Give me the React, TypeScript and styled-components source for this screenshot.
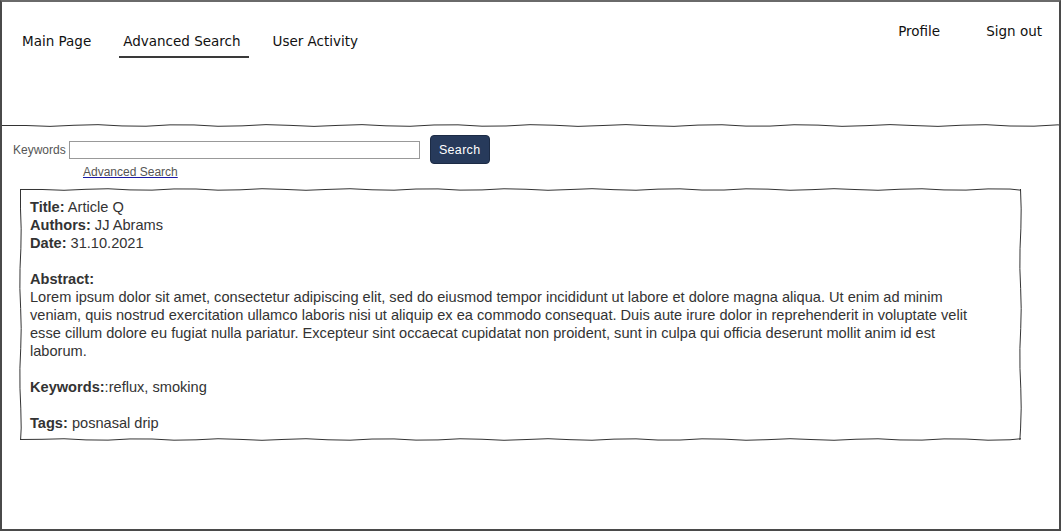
import React from "react";
import styled, { createGlobalStyle } from "styled-components";

const Global = createGlobalStyle`
  html, body { margin: 0; padding: 0; background: #fff; }
  * { box-sizing: border-box; }
`;

const Frame = styled.div`
  width: 1061px;
  height: 531px;
  border: 2px solid #4a4a4a;
  border-top-color: #6a6a6a;
  background: #fff;
  display: flex;
  flex-direction: column;
  overflow: hidden;
`;

const Header = styled.header`
  height: 121px;
  display: flex;
  justify-content: space-between;
  align-items: flex-start;
  padding: 0 17px 0 16px;
  font-family: "DejaVu Sans", Verdana, sans-serif;
  font-size: 13.5px;
  color: #111;
`;

const Tabs = styled.nav`
  display: flex;
  gap: 20px;
  padding-top: 31px;
`;

const Tab = styled.a<{ $active?: boolean }>`
  display: block;
  padding: 0 8px 6px 4px;
  line-height: 17px;
  border-bottom: 2px solid ${(p) => (p.$active ? "#3a3a3a" : "transparent")};
  color: inherit;
  text-decoration: none;
`;

const UserLinks = styled.div`
  display: flex;
  gap: 46px;
  padding-top: 21px;
  line-height: 17px;
`;

const Divider = styled.svg`
  display: block;
  width: 100%;
  height: 5px;
  flex: none;
`;

const SearchRow = styled.div`
  display: flex;
  align-items: center;
  padding: 7px 0 0 11px;
  font-family: "Liberation Sans", Arial, sans-serif;
`;

const Label = styled.label`
  font-size: 12px;
  color: #555;
  margin-right: 3px;
`;

const Input = styled.input`
  width: 351px;
  height: 18px;
  border: 1px solid #999;
  padding: 0 3px;
  margin: 0;
  outline: none;
`;

const Button = styled.button`
  margin-left: 10px;
  width: 60px;
  height: 29px;
  background: #273a5b;
  color: #fff;
  border: 1px solid #1c2b45;
  border-radius: 4px;
  font-family: "Liberation Sans", Arial, sans-serif;
  font-size: 12.5px;
  letter-spacing: 0.3px;
  padding: 0;
`;

const AdvLink = styled.a`
  align-self: flex-start;
  margin: 1px 0 0 81px;
  font-family: "Liberation Sans", Arial, sans-serif;
  font-size: 12px;
  line-height: 14px;
  color: #555;
  text-decoration: underline;
  text-decoration-color: #1a1aa6;
`;

const Card = styled.section`
  position: relative;
  margin: 10px 0 0 18px;
  width: 1001px;
  padding: 9px 10px 8px;
  font-family: "Liberation Sans", Arial, sans-serif;
  font-size: 14.6px;
  line-height: 18px;
  color: #333;
`;

const CardFrame = styled.svg`
  position: absolute;
  inset: 0;
  width: 100%;
  height: 100%;
  pointer-events: none;
  overflow: visible;
`;

const Para = styled.p<{ $gap?: boolean }>`
  margin: ${(p) => (p.$gap ? "18px" : "0")} 0 0;
  max-width: 950px;
`;

const Line = styled.div``;

const Body = styled.div`
  display: flex;
  flex-direction: column;
`;

function wave(width: number, y: number, amp: number, seg: number, phase = 0) {
  let d = `M0 ${y}`;
  let i = 0;
  for (let x = seg; x <= width + seg; x += seg) {
    const dy = Math.sin((i + phase) * 1.7) * amp;
    d += ` L${Math.min(x, width)} ${(y + dy).toFixed(2)}`;
    i++;
  }
  return d;
}

function vwave(height: number, x: number, amp: number, seg: number, phase = 0) {
  let d = `M${x} 0`;
  let i = 0;
  for (let y = seg; y <= height + seg; y += seg) {
    const dx = Math.sin((i + phase) * 1.3) * amp;
    d += ` L${(x + dx).toFixed(2)} ${Math.min(y, height)}`;
    i++;
  }
  return d;
}

export default function App() {
  const W = 1001;
  const H = 252;
  return (
    <>
      <Global />
      <Frame>
        <Header>
          <Tabs>
            <Tab>Main Page</Tab>
            <Tab $active>Advanced Search</Tab>
            <Tab>User Activity</Tab>
          </Tabs>
          <UserLinks>
            <span>Profile</span>
            <span>Sign out</span>
          </UserLinks>
        </Header>
        <Divider viewBox="0 0 1057 5" preserveAspectRatio="none">
          <path d={wave(1057, 2.5, 0.9, 24)} fill="none" stroke="#333" strokeWidth="1" />
        </Divider>
        <Body>
          <SearchRow>
            <Label>Keywords</Label>
            <Input type="text" />
            <Button>Search</Button>
          </SearchRow>
          <AdvLink>Advanced Search</AdvLink>
          <Card>
            <CardFrame viewBox={`0 0 ${W} ${H}`} preserveAspectRatio="none">
              <path d={wave(W, 0.5, 0.8, 22)} fill="none" stroke="#333" strokeWidth="1" />
              <path d={wave(W, H - 0.5, 0.8, 22, 2)} fill="none" stroke="#333" strokeWidth="1" />
              <path d={vwave(H, 0.5, 0.7, 20)} fill="none" stroke="#333" strokeWidth="1" />
              <path d={vwave(H, W - 0.5, 0.7, 20, 1)} fill="none" stroke="#333" strokeWidth="1" />
            </CardFrame>
            <Para>
              <Line><b>Title:</b> Article Q</Line>
              <Line><b>Authors:</b> JJ Abrams</Line>
              <Line><b>Date:</b> 31.10.2021</Line>
            </Para>
            <Para $gap>
              <Line><b>Abstract:</b></Line>
              Lorem ipsum dolor sit amet, consectetur adipiscing elit, sed do eiusmod tempor incididunt ut labore et dolore magna aliqua. Ut enim ad minim veniam, quis nostrud exercitation ullamco laboris nisi ut aliquip ex ea commodo consequat. Duis aute irure dolor in reprehenderit in voluptate velit esse cillum dolore eu fugiat nulla pariatur. Excepteur sint occaecat cupidatat non proident, sunt in culpa qui officia deserunt mollit anim id est laborum.
            </Para>
            <Para $gap>
              <b>Keywords:</b>:reflux, smoking
            </Para>
            <Para $gap>
              <b>Tags:</b> posnasal drip
            </Para>
          </Card>
        </Body>
      </Frame>
    </>
  );
}
